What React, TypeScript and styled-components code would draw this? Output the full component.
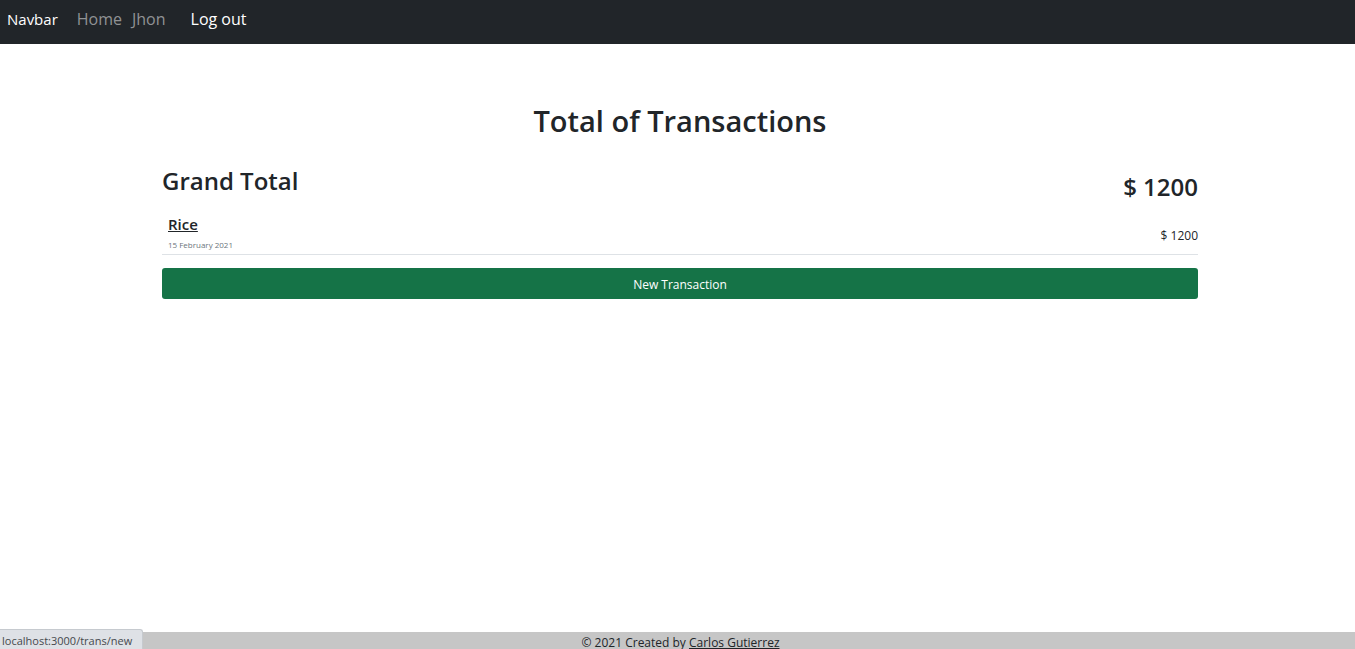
import React from "react";
import styled, { createGlobalStyle } from "styled-components";

const GlobalStyle = createGlobalStyle`
  *, *::before, *::after { box-sizing: border-box; }
  body {
    margin: 0;
    background: #fff;
    color: #212529;
    font-family: "Segoe UI", "Open Sans", "Noto Sans", sans-serif;
    font-size: 15px;
    line-height: 24px;
  }
  h1, h2, h3, p { margin: 0; font-weight: 600; }
  a { color: inherit; }
`;

const Page = styled.div`
  min-height: 100vh;
  display: flex;
  flex-direction: column;
`;

const Navbar = styled.nav`
  display: flex;
  align-items: baseline;
  height: 44px;
  padding: 7px 7px 13px;
  background: #212529;
  font-size: 16px;
`;

const Brand = styled.a`
  margin-right: 19px;
  color: #fff;
  font-size: 15px;
  text-decoration: none;
`;

const NavLinks = styled.div`
  display: flex;
  gap: 10px;
  margin-right: 25px;
`;

const NavLink = styled.a`
  color: #909294;
  text-decoration: none;
`;

const LogoutButton = styled.button`
  padding: 0;
  border: 0;
  background: none;
  color: #fff;
  font: inherit;
`;

const Main = styled.main`
  flex: 1;
  width: 100%;
  padding: 57px 157px 0 162px;
`;

const Title = styled.h1`
  font-size: 29px;
  line-height: 40px;
  text-align: center;
`;

const TotalRow = styled.div`
  display: flex;
  justify-content: space-between;
  margin-top: 24px;
`;

const TotalText = styled.h2`
  font-size: 24px;
  line-height: 32px;
`;

const TotalAmount = styled(TotalText)`
  padding-top: 6px;
`;

const Transaction = styled.article`
  display: flex;
  justify-content: space-between;
  align-items: flex-end;
  height: 52px;
  border-bottom: 1px solid #dee2e6;
`;

const Details = styled.div`
  padding: 0 6px 1px;
`;

const TransactionName = styled.h3`
  font-size: 15px;
  line-height: 26px;
`;

const TransactionDate = styled.time`
  display: block;
  color: #6c757d;
  font-size: 8px;
  line-height: 16px;
`;

const Amount = styled.span`
  padding-bottom: 6px;
  font-size: 12px;
`;

const NewButton = styled.button`
  display: block;
  width: 100%;
  height: 31px;
  margin-top: 13px;
  padding: 2px 0 0;
  border: 0;
  border-radius: 3px;
  background: #157347;
  color: #fff;
  font: inherit;
  font-size: 12px;
`;

const Footer = styled.footer`
  height: 17px;
  padding-left: 6px;
  background: #c6c6c6;
  font-size: 12px;
  line-height: 21px;
  text-align: center;
`;

const StatusBubble = styled.div`
  position: fixed;
  bottom: 0;
  left: 0;
  height: 20px;
  padding: 0 10px 0 2px;
  border: 1px solid #c6cacf;
  border-width: 1px 1px 0 0;
  border-radius: 0 3px 0 0;
  background: #dee1e6;
  color: #45494d;
  font-size: 11px;
  line-height: 22px;
`;

export default function App() {
  return (
    <>
      <GlobalStyle />
      <Page>
        <Navbar>
          <Brand href="#">Navbar</Brand>
          <NavLinks>
            <NavLink href="#">Home</NavLink>
            <NavLink href="#">Jhon</NavLink>
          </NavLinks>
          <LogoutButton type="button">Log out</LogoutButton>
        </Navbar>
        <Main>
          <Title>Total of Transactions</Title>
          <TotalRow>
            <TotalText>Grand Total</TotalText>
            <TotalAmount as="p">$ 1200</TotalAmount>
          </TotalRow>
          <Transaction>
            <Details>
              <TransactionName><a href="#">Rice</a></TransactionName>
              <TransactionDate dateTime="2021-02-15">15 February 2021</TransactionDate>
            </Details>
            <Amount>$ 1200</Amount>
          </Transaction>
          <NewButton type="button">New Transaction</NewButton>
        </Main>
        <Footer>© 2021 Created by <a href="#">Carlos Gutierrez</a></Footer>
      </Page>
      <StatusBubble>localhost:3000/trans/new</StatusBubble>
    </>
  );
}
